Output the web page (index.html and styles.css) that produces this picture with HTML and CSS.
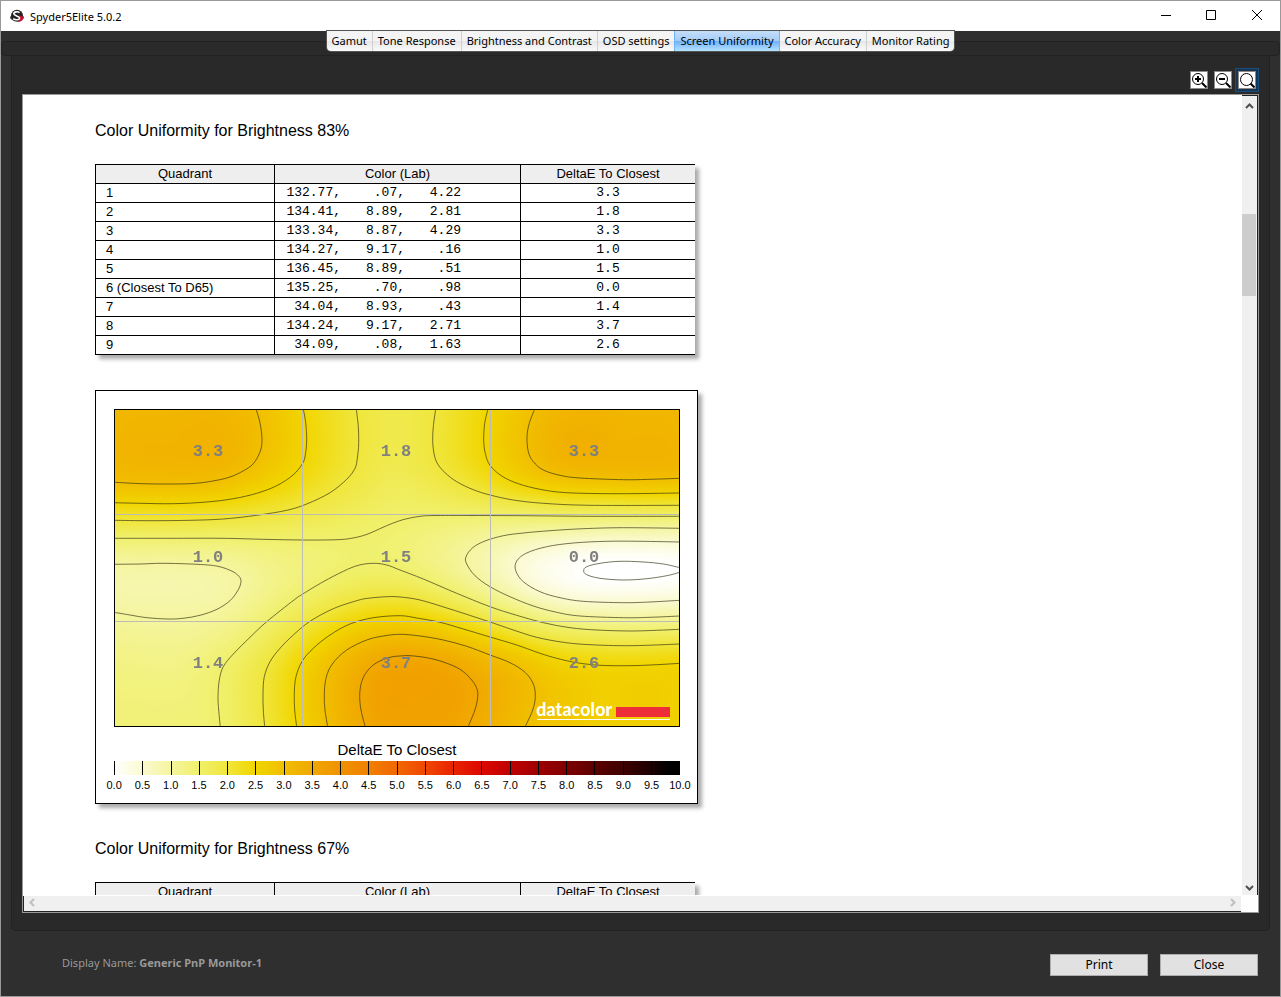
FILE: index.html
```html
<!DOCTYPE html>
<html lang="en">
<head>
<meta charset="utf-8">
<title>Spyder5Elite 5.0.2</title>
<link rel="stylesheet" href="styles.css">
</head>
<body>
<div class="window">
  <header class="titlebar">
    <svg class="app-icon" viewBox="0 0 14 14" aria-hidden="true">
      <ellipse cx="7" cy="8.500" rx="7" ry="3.500" fill="#444"/>
      <circle cx="7" cy="6.800" r="6" fill="#222"/>
      <path d="M9.500 6.500c3 0 4 1.500 3.500 3.500s-3 3-6 2.800c2-.8 3.500-3 2.500-6.300z" fill="#c8102e"/>
      <path d="M9.500 3.700C8.200 2.300 3.800 2.500 3.800 4.800S9.500 6.700 9.500 9 5.200 11.300 3.200 9.600" fill="none" stroke="#fff" stroke-width="1.600"/>
    </svg>
    <span class="app-title">Spyder5Elite 5.0.2</span>
    <div class="window-controls">
      <button type="button" aria-label="Minimize"><svg viewBox="0 0 12 12"><path d="M2 6.500h10"/></svg></button>
      <button type="button" aria-label="Maximize"><svg viewBox="0 0 12 12"><path d="M1.500 1.500h9v9h-9z"/></svg></button>
      <button type="button" aria-label="Close window"><svg viewBox="0 0 12 12"><path d="M1 1l10 10M11 1L1 11"/></svg></button>
    </div>
  </header>

  <nav class="tabstrip" aria-label="Reports">
    <div class="tabs">
      <button type="button" class="tab">Gamut</button>
      <button type="button" class="tab">Tone Response</button>
      <button type="button" class="tab">Brightness and Contrast</button>
      <button type="button" class="tab">OSD settings</button>
      <button type="button" class="tab tab-active" aria-pressed="true">Screen Uniformity</button>
      <button type="button" class="tab">Color Accuracy</button>
      <button type="button" class="tab">Monitor Rating</button>
    </div>
  </nav>

  <main class="panel">
    <div class="zoom-tools">
      <button type="button" class="zoom-button" aria-label="Zoom in"><svg viewBox="0 0 16 16"><circle cx="7" cy="7" r="5.500"/><path class="sign" d="M4 7h6M7 4v6"/><path class="handle" d="M11 11l4.500 4.500"/></svg></button>
      <button type="button" class="zoom-button" aria-label="Zoom out"><svg viewBox="0 0 16 16"><circle cx="7" cy="7" r="5.500"/><path class="sign" d="M4 7h6"/><path class="handle" d="M11 11l4.500 4.500"/></svg></button>
      <button type="button" class="zoom-button zoom-selected" aria-label="Actual size"><svg viewBox="0 0 16 16"><circle cx="7.500" cy="7.500" r="6"/><path class="handle" d="M11.500 11.500l4 4"/></svg></button>
    </div>

    <div class="document">
      <div class="page">
        <h2 class="section-title">Color Uniformity for Brightness 83%</h2>
        <table class="results">
          <thead><tr><th class="col-quadrant">Quadrant</th><th class="col-lab">Color (Lab)</th><th class="col-delta">DeltaE To Closest</th></tr></thead>
          <tbody>
            <tr><td>1</td><td class="lab"><span>132.77,</span><span>.07,</span><span>4.22</span></td><td class="delta">3.3</td></tr>
            <tr><td>2</td><td class="lab"><span>134.41,</span><span>8.89,</span><span>2.81</span></td><td class="delta">1.8</td></tr>
            <tr><td>3</td><td class="lab"><span>133.34,</span><span>8.87,</span><span>4.29</span></td><td class="delta">3.3</td></tr>
            <tr><td>4</td><td class="lab"><span>134.27,</span><span>9.17,</span><span>.16</span></td><td class="delta">1.0</td></tr>
            <tr><td>5</td><td class="lab"><span>136.45,</span><span>8.89,</span><span>.51</span></td><td class="delta">1.5</td></tr>
            <tr><td>6 (Closest To D65)</td><td class="lab"><span>135.25,</span><span>.70,</span><span>.98</span></td><td class="delta">0.0</td></tr>
            <tr><td>7</td><td class="lab"><span>34.04,</span><span>8.93,</span><span>.43</span></td><td class="delta">1.4</td></tr>
            <tr><td>8</td><td class="lab"><span>134.24,</span><span>9.17,</span><span>2.71</span></td><td class="delta">3.7</td></tr>
            <tr><td>9</td><td class="lab"><span>34.09,</span><span>.08,</span><span>1.63</span></td><td class="delta">2.6</td></tr>
          </tbody>
        </table>

        <figure class="chart">
          <div class="map">
            <canvas class="heat" width="283" height="159"></canvas>
            <svg class="overlay" viewBox="0 0 566 318" role="img" aria-label="DeltaE contour map">
              <g class="contours"></g>
              <path class="grid" d="M188.500 0v318M376.500 0v318M0 105.500h566M0 212.500h566"/>
              <g class="readings">
                <text x="94" y="47">3.3</text><text x="282" y="47">1.8</text><text x="470" y="47">3.3</text>
                <text x="94" y="153">1.0</text><text x="282" y="153">1.5</text><text x="470" y="153">0.0</text>
                <text x="94" y="259">1.4</text><text x="282" y="259">3.7</text><text x="470" y="259">2.6</text>
              </g>
              <text class="brand" x="422" y="307">datacolor</text>
              <rect x="502" y="298" width="54" height="10" fill="#ed2e38"/>
              <rect x="423" y="310" width="133" height="1" fill="#fff"/>
              <rect class="frame" x="0.500" y="0.500" width="565" height="317"/>
            </svg>
          </div>
          <figcaption class="scale-title">DeltaE To Closest</figcaption>
          <div class="scale"><i></i><i></i><i></i><i></i><i></i><i></i><i></i><i></i><i></i><i></i><i></i><i></i><i></i><i></i><i></i><i></i><i></i><i></i><i></i><i></i></div>
          <div class="scale-labels"><span>0.0</span><span>0.5</span><span>1.0</span><span>1.5</span><span>2.0</span><span>2.5</span><span>3.0</span><span>3.5</span><span>4.0</span><span>4.5</span><span>5.0</span><span>5.5</span><span>6.0</span><span>6.5</span><span>7.0</span><span>7.5</span><span>8.0</span><span>8.5</span><span>9.0</span><span>9.5</span><span>10.0</span></div>
        </figure>

        <h2 class="section-title">Color Uniformity for Brightness 67%</h2>
        <table class="results">
          <thead><tr><th class="col-quadrant">Quadrant</th><th class="col-lab">Color (Lab)</th><th class="col-delta">DeltaE To Closest</th></tr></thead>
        </table>
      </div>
      <div class="vbar">
        <svg viewBox="0 0 9 6"><path d="M1 5l3.500-3.500L8 5"/></svg>
        <div class="track"><div class="thumb"></div></div>
        <svg viewBox="0 0 9 6"><path d="M1 1l3.500 3.500L8 1"/></svg>
      </div>
      <div class="hbar">
        <svg viewBox="0 0 6 9"><path d="M5 1L1.500 4.500 5 8"/></svg>
        <svg viewBox="0 0 6 9"><path d="M1 1l3.500 3.500L1 8"/></svg>
      </div>
    </div>
  </main>

  <footer class="footer">
    <p class="display-name">Display Name: <b>Generic PnP Monitor-1</b></p>
    <div class="actions">
      <button type="button" class="action">Print</button>
      <button type="button" class="action">Close</button>
    </div>
  </footer>
</div>
<script src="map.js"></script>
</body>
</html>
```
FILE: styles.css
```css
* { box-sizing: border-box; }

body {
  margin: 0;
  font-family: "Noto Sans", "Open Sans", sans-serif;
  font-size: 11px;
  color: #000;
}

button { font: inherit; color: inherit; padding: 0; }

.window {
  display: flex;
  flex-direction: column;
  height: 100vh;
  border: 1px solid #999;
  background: #2f2f2f;
}

/* Title bar */
.titlebar {
  flex: none;
  display: flex;
  align-items: center;
  height: 30px;
  padding-left: 9px;
  background: #fff;
}
.app-icon { width: 14px; height: 14px; margin-right: 6px; }
.window-controls { display: flex; margin-left: auto; }
.window-controls button {
  display: flex;
  align-items: center;
  justify-content: center;
  width: 46px;
  height: 30px;
  border: 0;
  background: none;
}
.window-controls svg { width: 12px; height: 12px; margin-bottom: 2px; fill: none; stroke: #000; }

/* Tabs */
.tabstrip {
  flex: none;
  display: flex;
  justify-content: center;
  align-items: flex-start;
  height: 25px;
  position: relative;
}
.tabstrip::before {
  content: "";
  position: absolute;
  inset: 10px 0 0;
  border: 1px solid #222;
  border-radius: 4px;
  background: #2a2a2a;
}
.tabs {
  position: relative;
  display: flex;
  height: 20px;
  border-radius: 0 0 4px 4px;
  overflow: hidden;
  box-shadow: 0 0 0 1px #555;
}
.tab {
  padding: 0 5px;
  border: 0;
  border-right: 1px solid #d0d0d0;
  background: linear-gradient(#f4f4f4 50%, #e6e6e6 50%, #fafafa);
  line-height: 20px;
  white-space: nowrap;
}
.tab:last-child { border-right: 0; }
.tab-active {
  border-right-color: #6db3f8;
  box-shadow: -1px 0 #6db3f8;
  background: linear-gradient(#c4def8, #a5cdf9 48%, #73b2fa 52%, #b4e2ff);
}

/* Panel */
.panel {
  flex: 1;
  min-height: 0;
  display: flex;
  flex-direction: column;
  margin: 0 10px;
  padding: 12px 10px 17px;
  border: 1px solid #222;
  border-top: 0;
  border-radius: 0 0 5px 5px;
  background: #292929;
}
.zoom-tools {
  display: flex;
  align-items: center;
  justify-content: flex-end;
  gap: 6px;
  height: 24px;
  margin-bottom: 2px;
}
.zoom-button {
  width: 18px;
  height: 18px;
  border: 1px solid #8a8a8a;
  background: #fff;
}
.zoom-button svg { display: block; width: 16px; height: 16px; fill: none; stroke: #000; }
.zoom-button .sign { stroke-width: 2; }
.zoom-button .handle { stroke-width: 2; }
.zoom-selected { margin-right: 3px; outline: 1px solid #174f80; outline-offset: 2px; box-shadow: 0 0 0 2px #173450; }

/* Scrolling document */
.document {
  flex: 1;
  min-height: 0;
  display: grid;
  grid-template: minmax(0, 1fr) 17px / minmax(0, 1fr) 16px;
  border: 1px solid #999;
  background: #fff;
}
.page {
  overflow: hidden;
  padding: 26px 72px 0;
  font-family: "Liberation Sans", Arial, sans-serif;
}
.vbar {
  display: flex;
  flex-direction: column;
  align-items: center;
  padding: 7px 1px 4px 0;
  background: #f0f0f0;
  border-top: 1px solid #222;
  border-right: 1px solid #222;
}
.vbar svg { width: 9px; height: 6px; fill: none; stroke: #505050; stroke-width: 2; }
.track { flex: 1; width: 100%; padding-top: 105px; }
.thumb { height: 82px; background: #cdcdcd; }
.hbar {
  display: flex;
  justify-content: space-between;
  align-items: center;
  margin: 1px 1px 0 0;
  padding: 0 5px;
  background: #f0f0f0;
  border-bottom: 1px solid #222;
  border-left: 1px solid #222;
}
.hbar svg { width: 6px; height: 9px; margin-bottom: 2px; fill: none; stroke: #bfbfbf; stroke-width: 2; }

.section-title { margin: 0 0 24px; font-size: 16px; font-weight: normal; line-height: 19px; }

.results {
  width: 100%;
  max-width: 600px;
  table-layout: fixed;
  border-collapse: collapse;
  font-size: 13px;
  box-shadow: 4px 4px 4px #aaa;
  background: #fff;
}
.results th, .results td {
  height: 19px;
  padding: 0 0 0 10px;
  border: 1px solid #000;
  border-right: 0;
  font-weight: normal;
  line-height: 18px;
  text-align: left;
}
.results th { padding: 0; background: #eee; text-align: center; }
.col-quadrant { width: 179px; }
.col-lab { width: 246px; }
.results .lab, .results .delta { font-family: "Liberation Mono", "Courier New", monospace; }
.results .delta { padding: 0; text-align: center; }
.lab span { display: inline-block; width: 56px; text-align: right; }
.lab span:nth-child(2) { width: 64px; }

/* Chart */
.chart {
  width: 100%;
  max-width: 603px;
  margin: 35px 0;
  padding: 18px 17px 11px 18px;
  border: 1px solid #000;
  background: #fff;
  box-shadow: 4px 4px 4px #aaa;
}
.map { position: relative; }
.heat { position: absolute; width: 100%; height: 100%; }
.overlay { position: relative; display: block; width: 100%; }
.contours { fill: none; stroke: #302c10; stroke-opacity: 0.65; }
.grid { fill: none; stroke: #bdbdb5; stroke-width: 1; }
.frame { fill: none; stroke: #000; }
.readings {
  font-family: "Liberation Mono", "Courier New", monospace;
  font-size: 17px;
  font-weight: bold;
  fill: #808080;
  text-anchor: middle;
}
.brand { font-family: Lato, sans-serif; font-size: 18px; font-weight: 900; fill: #fff; }
.scale-title { margin: 14px 0 2px; font-size: 15px; line-height: 18px; text-align: center; }
.scale {
  display: flex;
  height: 14px;
  border-right: 1px solid #000;
  background: linear-gradient(90deg, #fff 0%, #fafad0 5%, #f5f5a0 10%, #f0f06c 15%, #f0e63c 20%, #f0d600 25%, #f0bf00 30%, #f0a900 35%, #f09200 40%, #f08000 45%, #f06800 50%, #f04800 55%, #e82400 60%, #dc0800 65%, #c00000 70%, #a00000 75%, #800000 80%, #5c0000 85%, #400000 90%, #1c0000 95%, #000 98%);
}
.scale i { flex: 1; border-left: 1px solid #000; }
.scale-labels { display: grid; grid-template-columns: repeat(21, 1fr); margin: 3px -14px 0; font-size: 11px; line-height: 14px; text-align: center; }

/* Footer */
.footer {
  flex: none;
  display: flex;
  align-items: flex-start;
  justify-content: space-between;
  height: 65px;
  padding: 23px 22px 0 61px;
}
.display-name { margin: 0; line-height: 18px; color: #999; }
.actions { display: flex; gap: 12px; }
.action { width: 98px; height: 22px; border: 1px solid #adadad; background: #e1e1e1; font-size: 12px; line-height: 18px; }
```
FILE: map.js
```js
// Contour lines of the DeltaE field: level, then x/y pairs in map units.
const contours = [
  [3, 142,0,146,14,148,31,146,43,139,55,129,62,116,68,99,72,79,74.5,56,75,29,74.7,0,73.3],
  [2.5, 189.3,0,191.7,14,192.7,31,191.3,46,188.3,55,179,66,162.7,76.7,142.7,84.3,119.3,89.7,92.7,93,59.3,94.7,26,94.3,0,93.7],
  [2, 242.3,0,244.3,17.7,244.7,34.3,243.3,49.3,241,59.3,232.7,70.3,216,83.7,192.7,95,172.7,101.3,142.7,106.3,109.3,110,76,111.3,36,111.7,0,111.3],
  [1.5, 0,129.3,56,129.3,109,129.3,149,130.3,189,131,223,130.7,239,129,253,125.3,269,118.3,276,115.3,289,110.7,306,107.3,323,106.5,359,106.5,409,106.7,476,107.3,566,107.3],
  [1, 0,155.3,26,155,49,154.3,83,155.3,104,157.3,119,162.7,126,168.7,126.7,174.3,123.7,181.7,116,191.7,103,200.3,86,206.3,69,209.3,54,210,33,208.7,16,206,0,203.3],
  [2, 321.7,0,319.3,17.7,318.7,32.7,320.3,46,323.7,55,331,63.7,342.7,72.7,359.3,80.7,376,86,399.3,91,429.3,94.3,476,96.3,566,96.3],
  [2.5, 374,0,370.7,14.3,369.7,31,371.3,44.3,376,56.3,387.7,67,404.3,74.7,426,80.3,452.7,83.7,502.7,84.7,566,84],
  [3, 420.7,0,415.3,14.3,413,27.7,414.3,42.7,419.3,52.7,429.3,61,446,66.3,466,69,509.3,70.7,536,70.3,566,69.3],
  [1, 566,119.3,509.3,118.7,469.3,119.7,436,121.7,409.3,124,389.3,126.7,371,132,358.7,138.7,352,147.7,352.7,155,361,166.7,376,177.7,396,187.7,419.3,197,442.7,203.3,466,207,509.3,208.7,536,208.3,566,207],
  [0.5, 566,133,526,132.3,492.7,132.3,459.3,134,432.7,137.7,412.7,144,402.7,152,401.7,161.7,409.3,172.7,426,182.7,446,188.7,469.3,192.3,509.3,193.7,536,193,566,191.3],
  [0, 566,158.7,549.3,155,529.3,153,506,152.3,486,154.3,472.7,157.7,469.7,161.7,472.7,165.7,486,169.3,509.3,171,532.7,169.7,552.7,166.7,566,163.3],
  [1.5, 106.3,318,104.7,301,104,287.7,105.3,271,109.3,257.7,119.3,245,136,228.3,152.7,212.7,180,191,188.3,185.3,209.3,172.7,229.3,162.3,244.3,156.3,259.3,154.3,272.7,156,286,161,309.3,170,342.7,184.3,376,197.7,402.7,206.3,429.3,213.7,456,218.7,482.7,221,516,222,542.7,221.3,566,220.3],
  [2, 150.7,318,149.3,301,149,284.3,150.3,267.7,156,252.7,166,239.3,179.3,226,196,212.3,219.3,199.7,242.7,191.7,254,189.3,272.7,187.7,286,188,306,191,336,200,376,213,399.3,221,422.7,228.3,449.3,233.3,476,235.7,516,236.7,566,235],
  [2.5, 182.7,318,180.7,301,180.3,284.3,182,267.7,188.3,252,199.3,239.3,216,226,236,215,259.3,208.7,286,206.7,302.7,209,326,213.3,349.3,220,376,228,402.7,236,426,244.3,442.7,249.3,462.7,253.7,486,256.3,516,256.7,542.7,255.7,566,254.3],
  [3, 213.7,318,211,301,210.3,286,212,269.3,218.3,255,232.7,241,252.7,231,269.3,227,286,225.3,306,227,329.3,231,352.7,237.3,376,246,396,253.7,411,263.3,419.3,275,421.3,287.7,418.7,301,411,318],
  [3.5, 251.3,318,247,301,245.7,286,247.7,272.7,253.3,262,262.7,253.7,276,248.3,286,247,296,246.7,312.7,248.7,329.3,253,346,260.3,357.7,271,363.3,281,363.3,291,360.3,302.7,354,318]
];

// Readings between the lines: x, y, level.
const spots = [
  [58,30,3.25],[0,0,3.18],[58,0,3.2],[0,30,3.2],[282,30,1.83],[282,0,1.85],[282,75,1.7],
  [510,30,3.25],[510,0,3.2],[566,0,3.18],[566,30,3.2],[302,286,3.68],[302,318,3.65],
  [58,180,0.85],[0,180,0.88],[0,318,1.38],[54,318,1.4],[0,260,1.3],[54,260,1.25],
  [566,318,2.6],[490,290,2.64],[566,287,2.62],[282,135,1.42],[515,162,-0.02]
];

const scale = [
  [255,255,255],[250,250,208],[245,245,160],[240,240,108],[240,230,60],
  [241,214,0],[241,191,0],[241,169,0],[241,146,0]
];

const group = document.querySelector(".contours");
const samples = spots.slice();

for (const [level, ...flat] of contours) {
  const p = [];
  for (let i = 0; i < flat.length; i += 2) p.push([flat[i], flat[i + 1]]);
  let d = "M" + p[0];
  for (let i = 0; i < p.length - 1; i++) {
    const a = p[Math.max(i - 1, 0)], b = p[i], c = p[i + 1], e = p[Math.min(i + 2, p.length - 1)];
    d += "C" + [b[0] + (c[0] - a[0]) / 6, b[1] + (c[1] - a[1]) / 6,
      c[0] - (e[0] - b[0]) / 6, c[1] - (e[1] - b[1]) / 6, c[0], c[1]];
  }
  const path = document.createElementNS("http://www.w3.org/2000/svg", "path");
  path.setAttribute("d", d);
  group.append(path);
  for (const [x, y] of p) samples.push([x, y, level]);
}

// Smooth surface through the samples (thin-plate spline).
const pts = samples.map(([x, y, v]) => [x / 100, y / 100, v]);
const n = pts.length;
const kernel = r2 => (r2 > 0 ? r2 * Math.log(r2) : 0);
const m = pts.map((p, i) => [
  ...pts.map((q, j) => kernel((p[0] - q[0]) ** 2 + (p[1] - q[1]) ** 2) + (i === j ? 0.01 : 0)),
  1, p[0], p[1], p[2]
]);
for (let k = 0; k < 3; k++) {
  m.push([...pts.map(p => (k === 0 ? 1 : p[k - 1])), 0, 0, 0, 0]);
}
const size = n + 3;
for (let c = 0; c < size; c++) {
  let best = c;
  for (let r = c + 1; r < size; r++) if (Math.abs(m[r][c]) > Math.abs(m[best][c])) best = r;
  [m[c], m[best]] = [m[best], m[c]];
  for (let r = c + 1; r < size; r++) {
    const f = m[r][c] / m[c][c];
    if (f) for (let k = c; k <= size; k++) m[r][k] -= f * m[c][k];
  }
}
const w = new Array(size).fill(0);
for (let r = size - 1; r >= 0; r--) {
  let s = m[r][size];
  for (let k = r + 1; k < size; k++) s -= m[r][k] * w[k];
  w[r] = s / m[r][r];
}

const canvas = document.querySelector(".heat");
const ctx = canvas.getContext("2d");
const image = ctx.createImageData(canvas.width, canvas.height);
for (let j = 0; j < canvas.height; j++) {
  for (let i = 0; i < canvas.width; i++) {
    const x = (i + 0.5) * 0.02, y = (j + 0.5) * 0.02;
    let v = w[n] + w[n + 1] * x + w[n + 2] * y;
    for (let k = 0; k < n; k++) v += w[k] * kernel((x - pts[k][0]) ** 2 + (y - pts[k][1]) ** 2);
    const t = Math.min(Math.max(v * 2, 0), 7.99), lo = Math.floor(t), o = (j * canvas.width + i) * 4;
    for (let k = 0; k < 3; k++) image.data[o + k] = scale[lo][k] + (scale[lo + 1][k] - scale[lo][k]) * (t - lo);
    image.data[o + 3] = 255;
  }
}
ctx.putImageData(image, 0, 0);
```
